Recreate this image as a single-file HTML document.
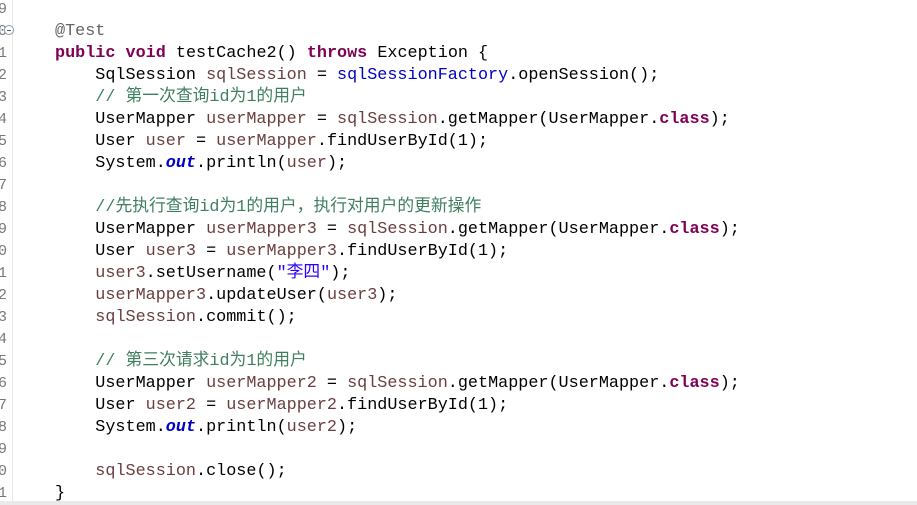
<!DOCTYPE html><html><head><meta charset="utf-8"><style>
body{margin:0;width:917px;height:505px;overflow:hidden;background:#fff;position:relative;font-family:"Liberation Mono","Noto Sans CJK SC",monospace;font-size:16.8px}
.g{position:absolute;left:0;top:0;width:12px;height:505px;border-right:1px solid #e8e8e8;background:#fff;overflow:hidden}
.n{position:absolute;right:5px;color:#787878;font-size:15px;line-height:22px}
.c{position:absolute;left:55px;top:-1px;line-height:22px;white-space:pre;color:#000}
.k{color:#7f0055;font-weight:bold}.v{color:#6a3e3e}.f{color:#0000c0}.fi{color:#0000c0;font-weight:bold;font-style:italic}
.cm{color:#3f7f5f}.s{color:#2a00ff}.a{color:#646464}
.bar{position:absolute;left:0;top:501px;width:917px;height:4px;background:#eaeaea}
</style></head><body>
<div class="g"><div class="n" style="top:-1px">9<br>0<br>1<br>2<br>3<br>4<br>5<br>6<br>7<br>8<br>9<br>0<br>1<br>2<br>3<br>4<br>5<br>6<br>7<br>8<br>9<br>0<br>1</div></div>
<div style="position:absolute;left:4px;top:25px;width:8px;height:8px;border:1px solid #8a9ab0;border-radius:50%;font-size:0;background:#fff"><div style="position:absolute;left:2px;top:4px;width:4px;height:1px;background:#556"></div></div>
<div class="c"> 
<span class="a">@Test</span>
<span class="k">public</span> <span class="k">void</span> testCache2() <span class="k">throws</span> Exception {
    SqlSession <span class="v">sqlSession</span> = <span class="f">sqlSessionFactory</span>.openSession();
    <span class="cm">// 第一次查询id为1的用户</span>
    UserMapper <span class="v">userMapper</span> = <span class="v">sqlSession</span>.getMapper(UserMapper.<span class="k">class</span>);
    User <span class="v">user</span> = <span class="v">userMapper</span>.findUserById(1);
    System.<span class="fi">out</span>.println(<span class="v">user</span>);

    <span class="cm">//先执行查询id为1的用户，执行对用户的更新操作</span>
    UserMapper <span class="v">userMapper3</span> = <span class="v">sqlSession</span>.getMapper(UserMapper.<span class="k">class</span>);
    User <span class="v">user3</span> = <span class="v">userMapper3</span>.findUserById(1);
    <span class="v">user3</span>.setUsername(<span class="s">"李四"</span>);
    <span class="v">userMapper3</span>.updateUser(<span class="v">user3</span>);
    <span class="v">sqlSession</span>.commit();

    <span class="cm">// 第三次请求id为1的用户</span>
    UserMapper <span class="v">userMapper2</span> = <span class="v">sqlSession</span>.getMapper(UserMapper.<span class="k">class</span>);
    User <span class="v">user2</span> = <span class="v">userMapper2</span>.findUserById(1);
    System.<span class="fi">out</span>.println(<span class="v">user2</span>);

    <span class="v">sqlSession</span>.close();
}</div>
<div class="bar"></div>
</body></html>
